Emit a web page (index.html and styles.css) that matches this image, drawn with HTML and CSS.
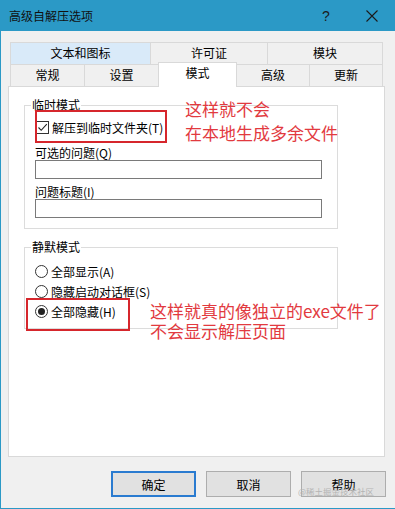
FILE: index.html
```html
<!DOCTYPE html>
<html lang="zh-CN">
<head>
<meta charset="UTF-8" />
<meta name="viewport" content="width=device-width, initial-scale=1" />
<title>高级自解压选项</title>
<link rel="stylesheet" href="styles.css">
</head>
<body>
  <div class="window" role="dialog" aria-label="高级自解压选项">
    <div class="titlebar">
      <span class="title">高级自解压选项</span>
      <span class="help">?</span>
      <span class="close" aria-label="关闭">
        <svg width="12" height="12" viewBox="0 0 12 12"><path d="M0.5 0.5 L11.5 11.5 M11.5 0.5 L0.5 11.5" stroke="#1b1b1b" stroke-width="1.1" fill="none"/></svg>
      </span>
    </div>

    <div class="dialog">
      <div class="tabs">
        <div class="tab-row">
          <div class="tab tab-hover w-text">文本和图标</div>
          <div class="tab w-license">许可证</div>
          <div class="tab w-module">模块</div>
        </div>
        <div class="tab-row">
          <div class="tab w-general">常规</div>
          <div class="tab w-setup">设置</div>
          <div class="tab tab-active w-mode">模式</div>
          <div class="tab w-advanced">高级</div>
          <div class="tab w-update">更新</div>
        </div>
      </div>

      <div class="panel">
        <fieldset class="group group-temp">
          <legend>临时模式</legend>
          <label class="option option-check">
            <span class="checkbox">
              <svg width="11" height="11" viewBox="0 0 11 11"><path d="M1.5 5.5 L4.2 8.3 L9.8 2.2" stroke="#222" stroke-width="1.1" fill="none"/></svg>
            </span>
            解压到临时文件夹(T)
          </label>
          <label class="field-label">可选的问题(Q)</label>
          <input class="textbox" type="text">
          <label class="field-label">问题标题(I)</label>
          <input class="textbox" type="text">
        </fieldset>

        <fieldset class="group group-silent">
          <legend>静默模式</legend>
          <label class="option option-radio"><span class="radio"></span>全部显示(A)</label>
          <label class="option option-radio"><span class="radio"></span>隐藏启动对话框(S)</label>
          <label class="option option-radio"><span class="radio checked"></span>全部隐藏(H)</label>
        </fieldset>

        <div class="mark mark-temp"></div>
        <p class="note note-temp">这样就不会<br>在本地生成多余文件</p>

        <div class="mark mark-silent"></div>
        <p class="note note-silent">这样就真的像独立的exe文件了<br>不会显示解压页面</p>
      </div>

      <div class="buttons">
        <button type="button" class="btn btn-default">确定</button>
        <button type="button" class="btn">取消</button>
        <button type="button" class="btn">帮助</button>
        <span class="watermark">@稀土掘金技术社区</span>
      </div>
    </div>
  </div>
</body>
</html>
```

FILE: styles.css
```css
body {
  margin: 0;
  font-family: "Noto Sans CJK SC", "Noto Sans", sans-serif;
  font-size: 12px;
  color: #000;
  background: #fff;
}

.window {
  width: 395px;
  height: 509px;
  box-sizing: border-box;
  background: #f0f0f0;
  border-left: 1px solid #2b99c6;
  border-bottom: 1px solid #2b99c6;
  overflow: hidden;
}

.titlebar {
  height: 31px;
  background: #2b99c6;
  display: flex;
  align-items: center;
}

.title {
  flex: 1;
  padding-left: 8px;
  color: #111;
  line-height: 16px;
}

.help {
  width: 46px;
  text-align: center;
  font-family: "Liberation Sans", sans-serif;
  font-size: 14px;
  color: #1b1b1b;
}

.close {
  width: 46px;
  display: flex;
  justify-content: center;
  align-items: center;
}

.dialog {
  position: relative;
  padding: 11px 10px 0 7px;
}

/* tabs */
.tabs {
  margin: 0 2px 0 2px;
}

.tab-row {
  display: flex;
  align-items: flex-start;
}

.tab {
  box-sizing: border-box;
  height: 22px;
  line-height: 20px;
  text-align: center;
  border: 1px solid #d9d9d9;
  border-bottom: none;
  background: #f0f0f0;
  margin-left: -1px;
}

.tab:first-child {
  margin-left: 0;
}

.tab-hover {
  background: #d9eaf9;
}

.tab-active {
  position: relative;
  z-index: 1;
  background: #fff;
  height: 25px;
  margin-top: -2px;
  margin-bottom: -1px;
  line-height: 20px;
}

.w-text { width: 141px; }
.w-license { width: 118px; }
.w-module { width: 116px; }
.w-general { width: 75px; }
.w-setup { width: 75px; }
.w-mode { width: 79px; }
.w-advanced { width: 74px; }
.w-update { width: 74px; }

/* panel */
.panel {
  position: relative;
  height: 371px;
  box-sizing: border-box;
  background: #fff;
  border: 1px solid #d9d9d9;
  padding-top: 10px;
}

.group {
  box-sizing: border-box;
  width: 314px;
  margin: 0 0 0 15px;
  padding: 0 16px 10px 10px;
  border: 1px solid #dcdcdc;
  min-inline-size: 0;
}

.group legend {
  padding: 0 1px;
  margin-left: -4px;
  line-height: 16px;
}

.group-silent {
  margin-top: 10px;
  padding-bottom: 7px;
}

.option {
  display: flex;
  align-items: center;
}

.option-check {
  height: 16px;
  margin-top: 6px;
}

.option-radio {
  height: 20px;
}

.option-radio:first-of-type {
  margin-top: 6px;
}

.checkbox {
  box-sizing: border-box;
  width: 13px;
  height: 13px;
  margin: 0 3px 0 1px;
  border: 1px solid #333;
  display: flex;
  align-items: center;
  justify-content: center;
}

.radio {
  box-sizing: border-box;
  width: 13px;
  height: 13px;
  margin-right: 3px;
  border: 1px solid #333;
  border-radius: 50%;
  display: flex;
  align-items: center;
  justify-content: center;
}

.radio.checked::after {
  content: "";
  width: 7px;
  height: 7px;
  border-radius: 50%;
  background: #222;
}

.field-label {
  display: block;
  line-height: 15px;
  margin-top: 10px;
}

.field-label + .textbox + .field-label {
  margin-top: 5px;
}

.textbox {
  display: block;
  box-sizing: border-box;
  width: 287px;
  height: 19px;
  margin: 0;
  padding: 0;
  border: 1px solid #7a7a7a;
  background: #fff;
}

/* red annotations */
.mark {
  position: absolute;
  box-sizing: border-box;
  border: 2px solid #d6262c;
}

.mark-temp {
  left: 26px;
  top: 23px;
  width: 132px;
  height: 33px;
}

.mark-silent {
  left: 17px;
  top: 211px;
  width: 104px;
  height: 33px;
}

.note {
  position: absolute;
  margin: 0;
  font-size: 17px;
  color: #e23a3f;
  white-space: nowrap;
}

.note-temp {
  left: 176px;
  top: 10px;
  line-height: 24px;
}

.note-silent {
  left: 141px;
  top: 214px;
  line-height: 20px;
}

/* buttons */
.buttons {
  position: relative;
  display: flex;
  justify-content: flex-end;
  gap: 10px;
  margin: 14px -1px 0 0;
}

.btn {
  box-sizing: border-box;
  width: 85px;
  height: 26px;
  padding: 0;
  font-family: inherit;
  font-size: 12px;
  color: #000;
  background: #e1e1e1;
  border: 1px solid #adadad;
}

.btn-default {
  border: 2px solid #2a7bd0;
}

.watermark {
  position: absolute;
  right: 12px;
  top: 15px;
  font-size: 8.5px;
  line-height: 10px;
  color: #b4b4b4;
  white-space: nowrap;
}
```
